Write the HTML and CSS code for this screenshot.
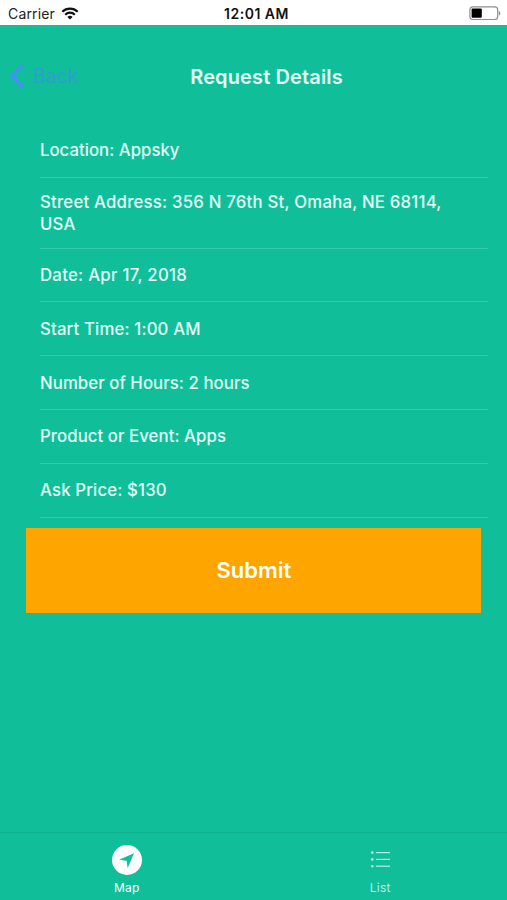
FILE: index.html
```html
<!DOCTYPE html>
<html lang="en">
<head>
    <meta charset="UTF-8">
    <meta name="viewport" content="width=device-width, initial-scale=1.0">
    <title>Request Details</title>
    <link rel="stylesheet" href="styles.css">
</head>
<body>
    <div class="status-bar">
        <div class="carrier">
            <span class="carrier-name">Carrier</span>
            <svg class="wifi" width="18" height="13" viewBox="0 0 18 13" fill="none" stroke="#111" stroke-width="2.2">
                <path d="M1.3 4.7a11 11 0 0 1 15.4 0"/>
                <path d="M4.2 7.7a6.8 6.8 0 0 1 9.6 0"/>
                <path d="M9 12.6L6.4 9.9a3.8 3.8 0 0 1 5.2 0z" fill="#111" stroke="none"/>
            </svg>
        </div>
        <span class="clock">12:01 AM</span>
        <svg class="battery" width="32" height="15" viewBox="0 0 32 15">
            <rect x="0.9" y="0.9" width="27.8" height="12.6" rx="3" fill="#fff" stroke="#8f8f8f" stroke-width="1.2"/>
            <rect x="2.6" y="2.6" width="10.2" height="9.2" rx="1" fill="#000"/>
            <path d="M29.8 5c2 .6 2 3.9 0 4.5z" fill="#8f8f8f"/>
        </svg>
    </div>

    <header class="header">
        <a href="#" class="back">
            <svg width="15" height="25" viewBox="0 0 15 25" fill="none" stroke="#4092f3" stroke-width="3.8">
                <path d="M14 1.3L3.2 12l10.8 10.800"/>
            </svg>
            <span>Back</span>
        </a>
        <h1 class="title">Request Details</h1>
    </header>

    <main class="content">
        <ul class="details">
            <li class="detail-item">Location: Appsky</li>
            <li class="detail-item address">Street Address: 356 N 76th St, Omaha, NE 68114, USA</li>
            <li class="detail-item date">Date: Apr 17, 2018</li>
            <li class="detail-item start">Start Time: 1:00 AM</li>
            <li class="detail-item hours">Number of Hours: 2 hours</li>
            <li class="detail-item product">Product or Event: Apps</li>
            <li class="detail-item price">Ask Price: $130</li>
        </ul>
        <button class="submit-button">Submit</button>
    </main>

    <nav class="tab-bar">
        <a href="#" class="tab active">
            <svg width="30" height="30" viewBox="0 0 30 30">
                <circle cx="15" cy="15" r="15" fill="#fff"/>
                <path d="M22 8.2L7 14.8l7.7.9.9 7.5z" fill="#10bf99"/>
            </svg>
            <span>Map</span>
        </a>
        <a href="#" class="tab">
            <svg width="30" height="30" viewBox="0 0 30 30" fill="#b4f0e1">
                <circle cx="7.3" cy="7.6" r="1.3"/>
                <circle cx="7.3" cy="14.4" r="1.3"/>
                <circle cx="7.3" cy="21.2" r="1.3"/>
                <rect x="11" y="7" width="14" height="1.2"/>
                <rect x="11" y="13.8" width="14" height="1.2"/>
                <rect x="11" y="20.6" width="14" height="1.2"/>
            </svg>
            <span>List</span>
        </a>
    </nav>
</body>
</html>
```
FILE: styles.css
```css
* {
    box-sizing: border-box;
}

body {
    margin: 0;
    height: 900px;
    display: flex;
    flex-direction: column;
    background: #10bf99;
    color: #e2fff8;
    font-family: Inter, 'Liberation Sans', sans-serif;
}

a {
    text-decoration: none;
    color: inherit;
}

.status-bar {
    display: grid;
    grid-template-columns: 1fr auto 1fr;
    align-items: center;
    height: 25px;
    padding: 2px 6px 0 8px;
    background: #fff;
    color: #222;
    font-size: 14px;
}

.carrier {
    display: flex;
    align-items: center;
    gap: 6px;
}

.carrier-name {
    letter-spacing: 0.15px;
}

.clock {
    margin-left: 4px;
    color: #111;
    font-weight: 600;
    letter-spacing: 0.5px;
}

.battery {
    justify-self: end;
}

.header {
    display: grid;
    grid-template-columns: 1fr auto 1fr;
    align-items: center;
    height: 98.8px;
    padding: 4px 0 0 9px;
}

.back {
    display: flex;
    align-items: center;
    gap: 9px;
    color: #2f9cd4;
    font-size: 19.5px;
}

.title {
    margin: 2px 0 0 17px;
    font-size: 20px;
    font-weight: 600;
    letter-spacing: 0.13px;
}

.content {
    flex: 1;
}

.details {
    margin: 0 19px 0 40px;
    padding: 0;
    list-style: none;
}

.detail-item {
    display: flex;
    align-items: center;
    height: 53.8px;
    border-bottom: 1px solid #3bc7a9;
    font-size: 16.8px;
    font-weight: 500;
    line-height: 22px;
}

.address {
    height: 71px;
    padding-right: 36px;
    letter-spacing: 0.2px;
}

.date {
    letter-spacing: 0.26px;
}

.start,
.price {
    letter-spacing: 0.14px;
}

.hours,
.product {
    letter-spacing: 0.05px;
}

.submit-button {
    display: block;
    width: 455px;
    height: 85px;
    margin: 10.4px 0 0 26.4px;
    border: 0;
    background: #ffa500;
    color: #fff;
    font-family: inherit;
    font-size: 22px;
    font-weight: 600;
}

.tab-bar {
    display: flex;
    height: 68px;
    border-top: 1px solid #10b18e;
}

.tab {
    flex: 1;
    display: flex;
    flex-direction: column;
    align-items: center;
    gap: 5px;
    padding-top: 12px;
    color: #b4f0e1;
    font-size: 12px;
    line-height: 15px;
    letter-spacing: 0.2px;
}

.tab.active {
    color: #fff;
}
```
